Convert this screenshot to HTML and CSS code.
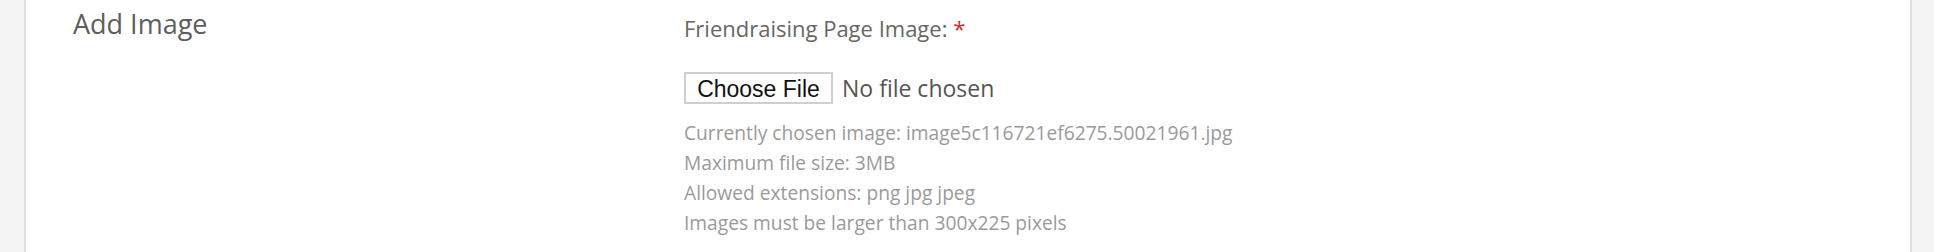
FILE: index.html
```html
<!DOCTYPE html>
<html lang="en">
<head>
<meta charset="utf-8">
<title>Add Image</title>
<link rel="stylesheet" href="styles.css">
</head>
<body>
<div class="page">
  <section class="panel">
    <h2 class="section-title">Add Image</h2>
    <div class="field">
      <label class="field-label">Friendraising Page Image: <span class="required">*</span></label>
      <div class="file-input">
        <button type="button" class="file-button">Choose File</button>
        <span class="file-status">No file chosen</span>
      </div>
      <div class="help">
        <div>Currently chosen image: image5c116721ef6275.50021961.jpg</div>
        <div>Maximum file size: 3MB</div>
        <div>Allowed extensions: png jpg jpeg</div>
        <div>Images must be larger than 300x225 pixels</div>
      </div>
    </div>
  </section>
</div>
</body>
</html>
```

FILE: styles.css
```css
html, body {
  margin: 0;
  padding: 0;
  background: #f4f4f4;
  height: 252px;
  overflow: hidden;
}
.page {
  padding: 0 22px 0 24px;
  height: 252px;
}
.panel {
  box-sizing: border-box;
  height: 252px;
  background: #ffffff;
  border-left: 2px solid #e0e0e0;
  border-right: 2px solid #e0e0e0;
  display: grid;
  grid-template-columns: 611px 1fr;
  padding: 0 0 0 47px;
  font-family: "Open Sans", sans-serif;
}
.section-title {
  margin: 0;
  padding-top: 4px;
  font-size: 27px;
  line-height: 40px;
  font-weight: 400;
  color: #5e5e5e;
}
.field {
  padding-top: 13px;
}
.field-label {
  display: block;
  font-size: 22px;
  line-height: 30px;
  color: #666666;
}
.required {
  color: #d9262c;
}
.file-input {
  display: flex;
  align-items: center;
  gap: 9px;
  margin-top: 29px;
}
.file-button {
  box-sizing: border-box;
  width: 149px;
  height: 32px;
  padding: 2px 0 0;
  background: #ffffff;
  border: 2px solid #cfcfcf;
  font-family: "Liberation Sans", Arial, sans-serif;
  font-size: 23px;
  line-height: 26px;
  color: #111111;
}
.file-status {
  font-family: "Open Sans", sans-serif;
  font-size: 23px;
  color: #555555;
}
.help {
  margin-top: 14px;
  font-size: 19.2px;
  line-height: 30px;
  color: #9a9a9a;
}
```
